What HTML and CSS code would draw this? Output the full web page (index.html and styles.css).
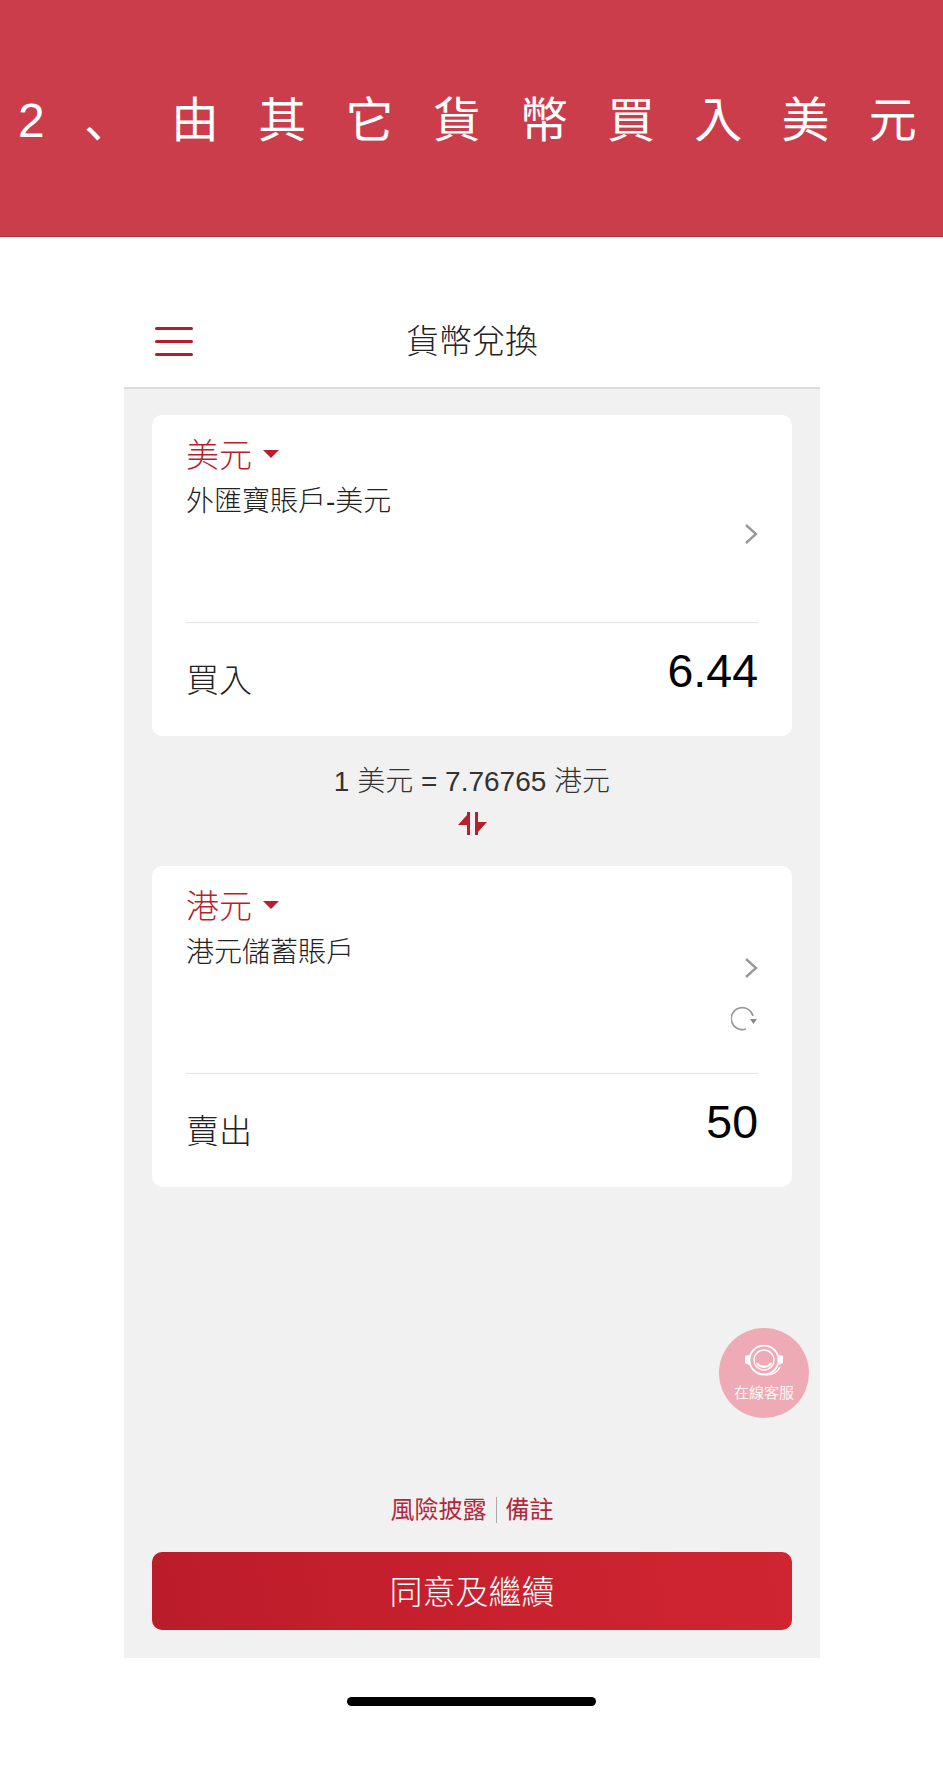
FILE: index.html
```html
<!DOCTYPE html>
<html lang="zh-Hant">
<head>
    <meta charset="UTF-8">
    <meta name="viewport" content="width=device-width, initial-scale=1.0">
    <title>貨幣兌換</title>
    <link rel="stylesheet" href="styles.css">
</head>
<body>
    <div class="banner">2<span class="banner-comma" lang="zh-Hans">、</span>由其它貨幣買入美<span class="banner-last">元</span></div>

    <div class="phone">
        <div class="nav">
            <div class="menu-icon">
                <span></span>
                <span></span>
                <span></span>
            </div>
            <div class="nav-title">貨幣兌換</div>
        </div>

        <div class="content">
            <div class="card">
                <div class="card-top">
                    <div>
                        <div class="currency">美元<span class="caret"></span></div>
                        <div class="account">外匯寶賬戶-美元</div>
                    </div>
                    <div class="card-icons card-icons-low">
                        <svg class="chevron" width="14" height="22" viewBox="0 0 14 22"><path d="M2 2l10 9-10 9" fill="none" stroke="#999" stroke-width="2.4"/></svg>
                    </div>
                </div>
                <div class="card-bottom">
                    <div class="trade-label">買入</div>
                    <div class="trade-value">6.44</div>
                </div>
            </div>

            <div class="rate">1 美元 = 7.76765 港元</div>
            <div class="swap">
                <svg width="29" height="23" viewBox="0 0 29 23"><path d="M9 0h3v23H9V13H0l9-10zM17 0h3v10h9l-9 10v3h-3z" fill="#b81f2d"/></svg>
            </div>

            <div class="card">
                <div class="card-top">
                    <div>
                        <div class="currency">港元<span class="caret"></span></div>
                        <div class="account">港元儲蓄賬戶</div>
                    </div>
                    <div class="card-icons">
                        <svg class="chevron" width="14" height="22" viewBox="0 0 14 22"><path d="M2 2l10 9-10 9" fill="none" stroke="#999" stroke-width="2.4"/></svg>
                        <svg class="refresh" width="28" height="26" viewBox="0 0 28 26"><path d="M15 24a11 11 0 1 1 7-13" fill="none" stroke="#999" stroke-width="1.6"/><path d="M19 14h7l-3.5 5z" fill="#888"/></svg>
                    </div>
                </div>
                <div class="card-bottom">
                    <div class="trade-label">賣出</div>
                    <div class="trade-value">50</div>
                </div>
            </div>

            <div class="links">
                <span>風險披露</span>
                <span class="links-sep"></span>
                <span>備註</span>
            </div>
            <div class="continue-btn">同意及繼續</div>

            <div class="service">
                <svg width="44" height="32" viewBox="0 0 44 32">
                    <circle cx="22" cy="15" r="14.5" fill="none" stroke="#fff" stroke-width="1.8"/>
                    <circle cx="22" cy="15" r="10" fill="none" stroke="#fff" stroke-width="1.4"/>
                    <path d="M15 18c3 5 11 5 14 0" fill="none" stroke="#fff" stroke-width="2.4"/>
                    <path d="M3 11l4-1v10l-4-2zM41 11l-4-1v10l4-2z" fill="#fff"/>
                    <path d="M38 22c-3 6-8 8-14 8" fill="none" stroke="#fff" stroke-width="1.4"/>
                </svg>
                <div class="service-text">在線客服</div>
            </div>
        </div>
    </div>

    <div class="home-bar"></div>
</body>
</html>
```

FILE: styles.css
```css
body {
    margin: 0;
    background: #fff;
    font-family: "Liberation Sans", "Noto Sans CJK TC", sans-serif;
    color: #222;
}

.banner {
    height: 236px;
    line-height: 242px;
    padding-left: 18px;
    background: #cb3d4a;
    border-bottom: 1px solid #a8343f;
    color: #fff;
    font-size: 48px;
    letter-spacing: 39.2px;
    white-space: nowrap;
}

.banner-comma {
    font-family: "Noto Sans CJK SC", sans-serif;
    line-height: 1;
}

.banner-last {
    letter-spacing: 0;
}

.phone {
    width: 696px;
    margin: 60px 0 0 124px;
}

.nav {
    position: relative;
    height: 90px;
    box-sizing: border-box;
    padding-bottom: 6px;
    display: flex;
    align-items: center;
    justify-content: center;
    box-shadow: 0 2px 0 #ddd;
    margin-bottom: 2px;
}

.nav-title {
    font-size: 33px;
    font-weight: 300;
    color: #222;
}

.menu-icon {
    position: absolute;
    left: 31px;
    top: 30px;
    width: 38px;
    display: flex;
    flex-direction: column;
    gap: 10px;
}

.menu-icon span {
    height: 3px;
    background: #b0202c;
    border-radius: 2px;
}

.content {
    position: relative;
    height: 1269px;
    box-sizing: border-box;
    padding: 26px 28px 28px;
    background: #f1f1f1;
    display: flex;
    flex-direction: column;
}

.card {
    height: 321px;
    flex-shrink: 0;
    padding: 0 34px;
    box-sizing: border-box;
    background: #fff;
    border-radius: 10px;
}

.card-top {
    height: 208px;
    box-sizing: border-box;
    padding-top: 21px;
    display: flex;
    justify-content: space-between;
    border-bottom: 1px solid #e4e4e4;
}

.currency {
    display: flex;
    align-items: flex-start;
    font-size: 33px;
    line-height: 40px;
    font-weight: 300;
    color: #b81f2d;
}

.caret {
    width: 0;
    height: 0;
    margin: 14px 0 0 11px;
    border-left: 8px solid transparent;
    border-right: 8px solid transparent;
    border-top: 8px solid #b81f2d;
}

.account {
    margin-top: 6px;
    font-size: 28px;
    line-height: 40px;
    font-weight: 300;
}

.card-icons {
    display: flex;
    flex-direction: column;
    align-items: flex-end;
    padding-top: 70px;
}

.card-icons-low {
    padding-top: 87px;
}

.refresh {
    margin-top: 26px;
    margin-right: -1px;
}

.card-bottom {
    display: flex;
    justify-content: space-between;
    align-items: flex-start;
}

.trade-label {
    margin-top: 38px;
    font-size: 33px;
    line-height: 40px;
    font-weight: 300;
}

.trade-value {
    margin-top: 23px;
    font-size: 46.5px;
    line-height: 50px;
    color: #000;
}

.rate {
    margin-top: 26px;
    font-size: 28px;
    line-height: 40px;
    font-weight: 300;
    text-align: center;
    color: #333;
}

.swap {
    margin: 10px 0 31px;
    height: 23px;
    display: flex;
    justify-content: center;
}

.links {
    margin-top: auto;
    display: flex;
    justify-content: center;
    align-items: center;
    gap: 9px;
    font-size: 24px;
    line-height: 32px;
    color: #b0283a;
}

.links-sep {
    width: 1px;
    height: 26px;
    background: #aaa;
}

.continue-btn {
    margin-top: 26px;
    height: 78px;
    line-height: 82px;
    text-align: center;
    border-radius: 10px;
    background: linear-gradient(80deg, #bb1c2a 0%, #c9212e 55%, #cf2531 100%);
    color: #fff;
    font-size: 33px;
    font-weight: 300;
}

.service {
    position: absolute;
    right: 11px;
    top: 939px;
    width: 90px;
    height: 90px;
    padding-top: 17px;
    box-sizing: border-box;
    border-radius: 50%;
    background: #eeaab5;
    display: flex;
    flex-direction: column;
    align-items: center;
}

.service-text {
    margin-top: 7px;
    font-size: 15px;
    line-height: 18px;
    color: #fff;
    opacity: 0.9;
}

.home-bar {
    width: 249px;
    height: 9px;
    margin: 39px auto 0;
    background: #000;
    border-radius: 5px;
}
```
